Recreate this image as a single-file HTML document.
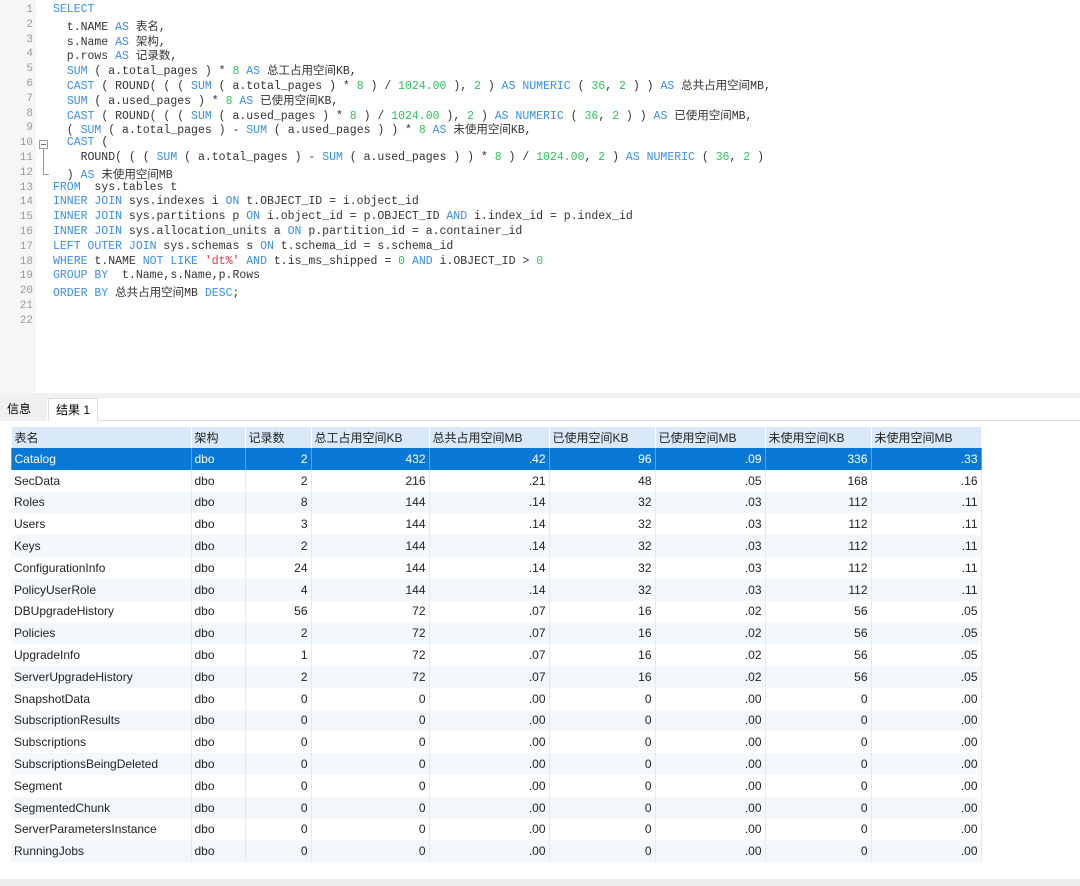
<!DOCTYPE html>
<html><head><meta charset="utf-8"><style>
*{margin:0;padding:0;box-sizing:border-box}
body{width:1080px;height:886px;background:#fff;position:relative;overflow:hidden;font-family:"Liberation Sans","Noto Sans CJK SC",sans-serif}
#ed{position:absolute;left:0;top:0;width:1080px;height:393px;background:#fff}
#gut{position:absolute;left:0;top:0;width:36px;height:393px;background:#f6f6f6}
.ln{position:absolute;left:0;width:33px;text-align:right;font:11px "Liberation Mono",monospace;color:#999}
.cl{position:absolute;left:53px;white-space:pre;font:11.5px "Liberation Mono","Noto Sans CJK SC",monospace;color:#333}
.k{color:#3a8ef0}.n{color:#2ec35c}.s{color:#e8303f}
#sep{position:absolute;left:0;top:393px;width:1080px;height:5px;background:#f0f0f0}
.tab{position:absolute;top:398px;height:23px;font-size:12px;line-height:23px;padding:0 7px}
table{position:absolute;left:0;top:427px;border-collapse:collapse;font-size:12px;color:#222}
td{height:21.8px;padding:0 3px;border-right:1px solid #e6eaee;white-space:nowrap;overflow:hidden}
td.r{text-align:right}
tr.h td{background:#d9e9f8;border-right:1px solid #fff;height:21px}
tr.a td{background:#f3f8fd}
tr.sel td{background:#0a78d6;color:#fff;border-right:1px solid #5aa4e6}
td.rh{background:#fff!important;border-right:none;width:10px;padding:0;color:#000}
tr.h td.rh{background:#fff!important}
#bot{position:absolute;left:0;top:879px;width:1080px;height:7px;background:#eeeeee}
</style></head><body>
<div id="ed"><div id="gut"></div>
<div class="ln" style="top:4px">1</div><div class="ln" style="top:19px">2</div><div class="ln" style="top:34px">3</div><div class="ln" style="top:48px">4</div><div class="ln" style="top:63px">5</div><div class="ln" style="top:78px">6</div><div class="ln" style="top:93px">7</div><div class="ln" style="top:108px">8</div><div class="ln" style="top:122px">9</div><div class="ln" style="top:137px">10</div><div class="ln" style="top:152px">11</div><div class="ln" style="top:167px">12</div><div class="ln" style="top:182px">13</div><div class="ln" style="top:196px">14</div><div class="ln" style="top:211px">15</div><div class="ln" style="top:226px">16</div><div class="ln" style="top:241px">17</div><div class="ln" style="top:256px">18</div><div class="ln" style="top:270px">19</div><div class="ln" style="top:285px">20</div><div class="ln" style="top:300px">21</div><div class="ln" style="top:315px">22</div>
<div style="position:absolute;left:39px;top:140px;width:9px;height:9px;border:1px solid #999;background:#fff"><div style="position:absolute;left:1px;top:3px;width:5px;height:1px;background:#777"></div></div>
<div style="position:absolute;left:43px;top:149px;width:1px;height:25px;background:#999"></div>
<div style="position:absolute;left:43px;top:174px;width:6px;height:1px;background:#999"></div>
<div class="cl" style="top:3px"><span class="k">SELECT</span></div>
<div class="cl" style="top:18px">  t.NAME <span class="k">AS</span> 表名,</div>
<div class="cl" style="top:33px">  s.Name <span class="k">AS</span> 架构,</div>
<div class="cl" style="top:47px">  p.rows <span class="k">AS</span> 记录数,</div>
<div class="cl" style="top:62px">  <span class="k">SUM</span> ( a.total_pages ) * <span class="n">8</span> <span class="k">AS</span> 总工占用空间KB,</div>
<div class="cl" style="top:77px">  <span class="k">CAST</span> ( ROUND( ( ( <span class="k">SUM</span> ( a.total_pages ) * <span class="n">8</span> ) / <span class="n">1024.00</span> ), <span class="n">2</span> ) <span class="k">AS NUMERIC</span> ( <span class="n">36</span>, <span class="n">2</span> ) ) <span class="k">AS</span> 总共占用空间MB,</div>
<div class="cl" style="top:92px">  <span class="k">SUM</span> ( a.used_pages ) * <span class="n">8</span> <span class="k">AS</span> 已使用空间KB,</div>
<div class="cl" style="top:107px">  <span class="k">CAST</span> ( ROUND( ( ( <span class="k">SUM</span> ( a.used_pages ) * <span class="n">8</span> ) / <span class="n">1024.00</span> ), <span class="n">2</span> ) <span class="k">AS NUMERIC</span> ( <span class="n">36</span>, <span class="n">2</span> ) ) <span class="k">AS</span> 已使用空间MB,</div>
<div class="cl" style="top:121px">  ( <span class="k">SUM</span> ( a.total_pages ) - <span class="k">SUM</span> ( a.used_pages ) ) * <span class="n">8</span> <span class="k">AS</span> 未使用空间KB,</div>
<div class="cl" style="top:136px">  <span class="k">CAST</span> (</div>
<div class="cl" style="top:151px">    ROUND( ( ( <span class="k">SUM</span> ( a.total_pages ) - <span class="k">SUM</span> ( a.used_pages ) ) * <span class="n">8</span> ) / <span class="n">1024.00</span>, <span class="n">2</span> ) <span class="k">AS NUMERIC</span> ( <span class="n">36</span>, <span class="n">2</span> )</div>
<div class="cl" style="top:166px">  ) <span class="k">AS</span> 未使用空间MB</div>
<div class="cl" style="top:181px"><span class="k">FROM</span>  sys.tables t</div>
<div class="cl" style="top:195px"><span class="k">INNER JOIN</span> sys.indexes i <span class="k">ON</span> t.OBJECT_ID = i.object_id</div>
<div class="cl" style="top:210px"><span class="k">INNER JOIN</span> sys.partitions p <span class="k">ON</span> i.object_id = p.OBJECT_ID <span class="k">AND</span> i.index_id = p.index_id</div>
<div class="cl" style="top:225px"><span class="k">INNER JOIN</span> sys.allocation_units a <span class="k">ON</span> p.partition_id = a.container_id</div>
<div class="cl" style="top:240px"><span class="k">LEFT OUTER JOIN</span> sys.schemas s <span class="k">ON</span> t.schema_id = s.schema_id</div>
<div class="cl" style="top:255px"><span class="k">WHERE</span> t.NAME <span class="k">NOT LIKE</span> <span class="s">'dt%'</span> <span class="k">AND</span> t.is_ms_shipped = <span class="n">0</span> <span class="k">AND</span> i.OBJECT_ID &gt; <span class="n">0</span></div>
<div class="cl" style="top:269px"><span class="k">GROUP BY</span>  t.Name,s.Name,p.Rows</div>
<div class="cl" style="top:284px"><span class="k">ORDER BY</span> 总共占用空间MB <span class="k">DESC</span>;</div>
</div>
<div id="sep"></div>
<div style="position:absolute;left:0;top:420px;width:1080px;height:1px;background:#ddd"></div>
<div class="tab" style="left:0;background:#f0f0f0;width:47px">信息</div>
<div class="tab" style="left:48px;background:#fff;border:1px solid #ddd;border-bottom:none;width:50px">结果 1</div>
<table>
<colgroup><col style="width:11px"><col style="width:180px"><col style="width:54px"><col style="width:66px"><col style="width:118px"><col style="width:120px"><col style="width:106px"><col style="width:110px"><col style="width:106px"><col style="width:110px"></colgroup>
<tr class="h"><td class="rh"></td><td>表名</td><td>架构</td><td>记录数</td><td>总工占用空间KB</td><td>总共占用空间MB</td><td>已使用空间KB</td><td>已使用空间MB</td><td>未使用空间KB</td><td>未使用空间MB</td></tr>
<tr class="sel"><td class="rh" style="font-size:10px">❯</td><td>Catalog</td><td>dbo</td><td class="r">2</td><td class="r">432</td><td class="r">.42</td><td class="r">96</td><td class="r">.09</td><td class="r">336</td><td class="r">.33</td></tr>
<tr><td class="rh"></td><td>SecData</td><td>dbo</td><td class="r">2</td><td class="r">216</td><td class="r">.21</td><td class="r">48</td><td class="r">.05</td><td class="r">168</td><td class="r">.16</td></tr>
<tr class="a"><td class="rh"></td><td>Roles</td><td>dbo</td><td class="r">8</td><td class="r">144</td><td class="r">.14</td><td class="r">32</td><td class="r">.03</td><td class="r">112</td><td class="r">.11</td></tr>
<tr><td class="rh"></td><td>Users</td><td>dbo</td><td class="r">3</td><td class="r">144</td><td class="r">.14</td><td class="r">32</td><td class="r">.03</td><td class="r">112</td><td class="r">.11</td></tr>
<tr class="a"><td class="rh"></td><td>Keys</td><td>dbo</td><td class="r">2</td><td class="r">144</td><td class="r">.14</td><td class="r">32</td><td class="r">.03</td><td class="r">112</td><td class="r">.11</td></tr>
<tr><td class="rh"></td><td>ConfigurationInfo</td><td>dbo</td><td class="r">24</td><td class="r">144</td><td class="r">.14</td><td class="r">32</td><td class="r">.03</td><td class="r">112</td><td class="r">.11</td></tr>
<tr class="a"><td class="rh"></td><td>PolicyUserRole</td><td>dbo</td><td class="r">4</td><td class="r">144</td><td class="r">.14</td><td class="r">32</td><td class="r">.03</td><td class="r">112</td><td class="r">.11</td></tr>
<tr><td class="rh"></td><td>DBUpgradeHistory</td><td>dbo</td><td class="r">56</td><td class="r">72</td><td class="r">.07</td><td class="r">16</td><td class="r">.02</td><td class="r">56</td><td class="r">.05</td></tr>
<tr class="a"><td class="rh"></td><td>Policies</td><td>dbo</td><td class="r">2</td><td class="r">72</td><td class="r">.07</td><td class="r">16</td><td class="r">.02</td><td class="r">56</td><td class="r">.05</td></tr>
<tr><td class="rh"></td><td>UpgradeInfo</td><td>dbo</td><td class="r">1</td><td class="r">72</td><td class="r">.07</td><td class="r">16</td><td class="r">.02</td><td class="r">56</td><td class="r">.05</td></tr>
<tr class="a"><td class="rh"></td><td>ServerUpgradeHistory</td><td>dbo</td><td class="r">2</td><td class="r">72</td><td class="r">.07</td><td class="r">16</td><td class="r">.02</td><td class="r">56</td><td class="r">.05</td></tr>
<tr><td class="rh"></td><td>SnapshotData</td><td>dbo</td><td class="r">0</td><td class="r">0</td><td class="r">.00</td><td class="r">0</td><td class="r">.00</td><td class="r">0</td><td class="r">.00</td></tr>
<tr class="a"><td class="rh"></td><td>SubscriptionResults</td><td>dbo</td><td class="r">0</td><td class="r">0</td><td class="r">.00</td><td class="r">0</td><td class="r">.00</td><td class="r">0</td><td class="r">.00</td></tr>
<tr><td class="rh"></td><td>Subscriptions</td><td>dbo</td><td class="r">0</td><td class="r">0</td><td class="r">.00</td><td class="r">0</td><td class="r">.00</td><td class="r">0</td><td class="r">.00</td></tr>
<tr class="a"><td class="rh"></td><td>SubscriptionsBeingDeleted</td><td>dbo</td><td class="r">0</td><td class="r">0</td><td class="r">.00</td><td class="r">0</td><td class="r">.00</td><td class="r">0</td><td class="r">.00</td></tr>
<tr><td class="rh"></td><td>Segment</td><td>dbo</td><td class="r">0</td><td class="r">0</td><td class="r">.00</td><td class="r">0</td><td class="r">.00</td><td class="r">0</td><td class="r">.00</td></tr>
<tr class="a"><td class="rh"></td><td>SegmentedChunk</td><td>dbo</td><td class="r">0</td><td class="r">0</td><td class="r">.00</td><td class="r">0</td><td class="r">.00</td><td class="r">0</td><td class="r">.00</td></tr>
<tr><td class="rh"></td><td>ServerParametersInstance</td><td>dbo</td><td class="r">0</td><td class="r">0</td><td class="r">.00</td><td class="r">0</td><td class="r">.00</td><td class="r">0</td><td class="r">.00</td></tr>
<tr class="a"><td class="rh"></td><td>RunningJobs</td><td>dbo</td><td class="r">0</td><td class="r">0</td><td class="r">.00</td><td class="r">0</td><td class="r">.00</td><td class="r">0</td><td class="r">.00</td></tr>
</table>
<div id="bot"></div>
</body></html>
